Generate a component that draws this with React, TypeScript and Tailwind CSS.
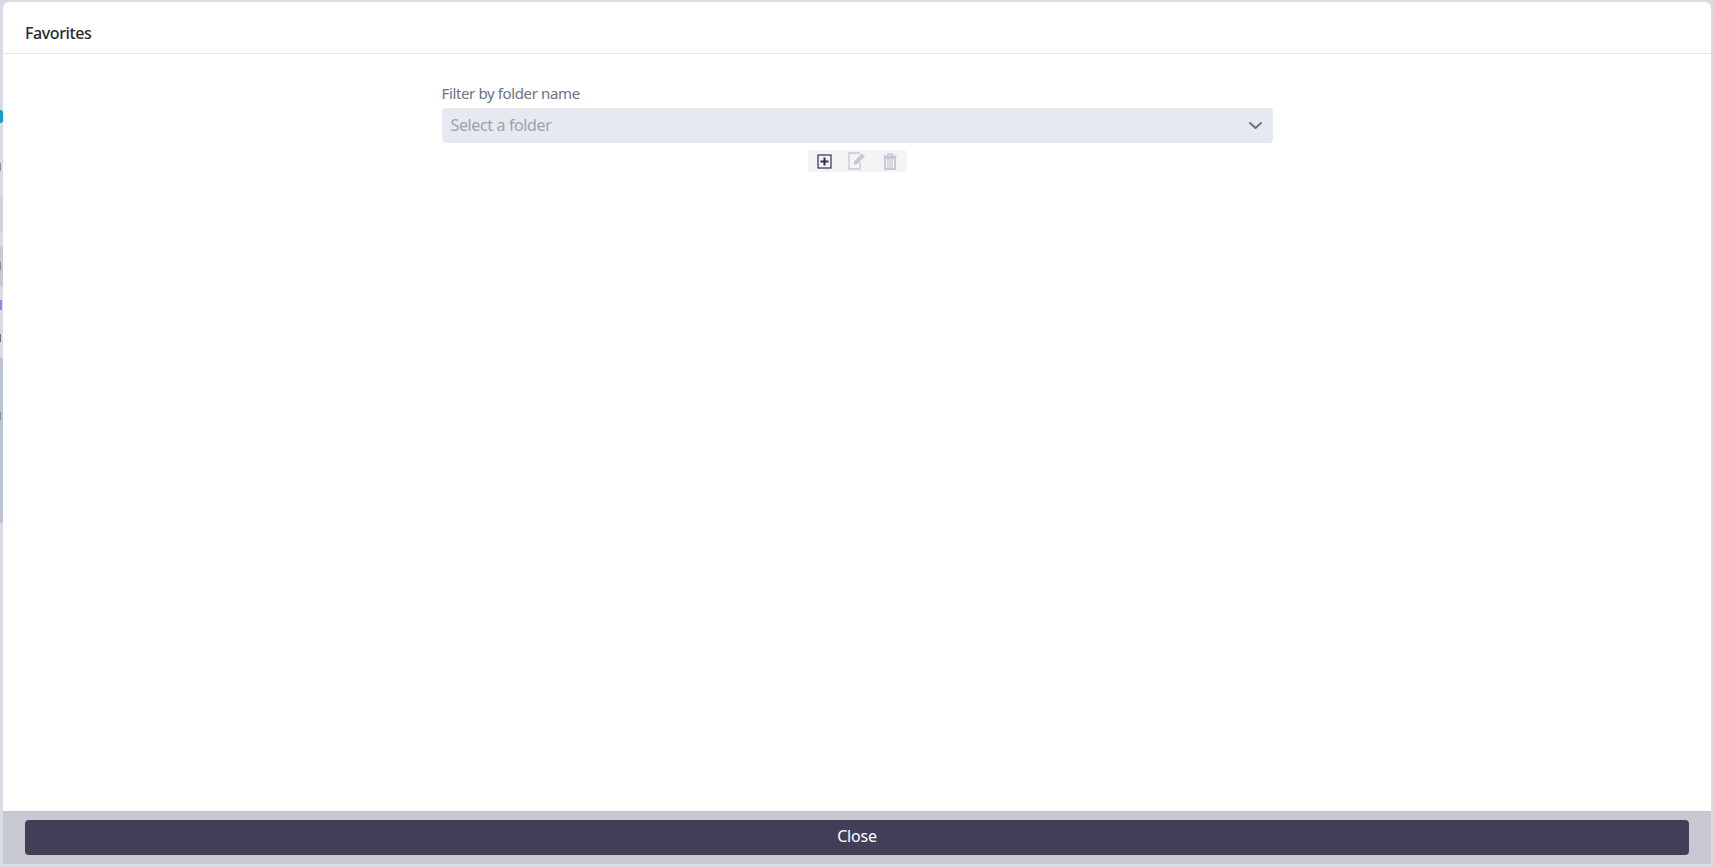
const font = { fontFamily: '"Noto Sans", sans-serif' };

function BackdropSliver() {
  // bits of the page behind the modal, only 3px of it shows
  return (
    <div className="absolute left-0 top-0 h-full w-[3px] overflow-hidden bg-[#d8dbe1]">
      <div className="absolute left-0 top-[110px] h-[13px] w-[3px] rounded-r-sm bg-[#1b9cc4]" />
      <div className="absolute left-0 top-[163px] h-[8px] w-[1px] bg-[#8b8f98]" />
      <div className="absolute left-0 top-[198px] h-[34px] w-[3px] bg-[#cfd2d8]" />
      <div className="absolute left-0 top-[246px] h-[40px] w-[3px] bg-[#c5c8cf]" />
      <div className="absolute left-0 top-[262px] h-[8px] w-[1px] bg-[#8b8f98]" />
      <div className="absolute left-0 top-[300px] h-[10px] w-[2px] bg-[#8f8ce0]" />
      <div className="absolute left-0 top-[334px] h-[8px] w-[1px] bg-[#6b7280]" />
      <div className="absolute left-0 top-[358px] h-[165px] w-[3px] bg-[#bcc3ce]" />
      <div className="absolute left-0 top-[412px] h-[8px] w-[1px] bg-[#8b8f98]" />
    </div>
  );
}

export default function App() {
  return (
    <div style={font} className="relative h-[867px] w-[1713px] overflow-hidden bg-[#d8dbe1]">
      <BackdropSliver />
      <div className="relative ml-[3px] mt-[2px] flex h-[862px] w-[1708px] flex-col overflow-hidden rounded-t-md bg-white">
        <div className="flex h-[52px] shrink-0 items-center border-b border-[#e5e7eb] pl-[22px] pt-[11px]">
          <h1 className="text-[16px] font-medium tracking-[-0.4px] text-[#1f2937]">Favorites</h1>
        </div>
        <div className="flex flex-1 flex-col items-center pt-[27px]">
          <div className="w-[831px]">
            <label className="mb-[2px] block text-[15px] leading-[25px] tracking-[-0.37px] text-[#6b7280]">Filter by folder name</label>
            <div className="flex h-[35px] items-center justify-between rounded bg-[#e6e9ef] pl-[9px] pr-[10px]">
              <span className="relative -top-px text-[16px] tracking-[-0.37px] text-[#9ca3af]">Select a folder</span>
              <svg width="15" height="9" viewBox="0 0 15 9" fill="none" stroke="#6b7280" strokeWidth="2" strokeLinecap="round" strokeLinejoin="round">
                <path d="M2 2l5.5 5 5.5-5" />
              </svg>
            </div>
            <div className="mt-[7px] flex justify-center">
              <button className="flex h-[22px] w-[33px] items-center justify-center rounded-l bg-[#f3f4f6]">
                <svg width="15" height="15" viewBox="0 0 15 15" fill="none" stroke="#312e51">
                  <rect x="1" y="1" width="13" height="13" strokeWidth="1.2" />
                  <path d="M7.5 3.5v8M3.5 7.5h8" strokeWidth="2" />
                </svg>
              </button>
              <button className="flex h-[22px] w-[33px] items-center justify-center bg-[#f3f4f6]">
                <svg width="18" height="18" viewBox="0 0 18 18" fill="none">
                  <path d="M12 1H1v16h11v-7" stroke="#c5c9d1" strokeWidth="1.3" />
                  <path d="M5.5 13l1-4L14 1.2l3 3L9.5 12z" fill="#c5c9d1" />
                </svg>
              </button>
              <button className="flex h-[22px] w-[33px] items-center justify-center rounded-r bg-[#f3f4f6]">
                <svg width="14" height="17" viewBox="0 0 14 17" fill="none" stroke="#c5c9d1">
                  <path d="M0.5 3.5h13" strokeWidth="1.8" />
                  <path d="M4.5 3V1h5v2" strokeWidth="1.3" />
                  <path d="M2 5h10v11H2z" strokeWidth="1.8" />
                  <path d="M5 6v9M7 6v9M9 6v9" strokeWidth="1.1" />
                </svg>
              </button>
            </div>
          </div>
        </div>
        <div className="flex h-[53px] shrink-0 items-start bg-[#c8c8d2] px-[22px] pt-[9px]">
          <button className="h-[35px] w-full rounded bg-[#423e58] pb-[4px] text-[16px] tracking-[-0.2px] text-white">Close</button>
        </div>
      </div>
    </div>
  );
}
